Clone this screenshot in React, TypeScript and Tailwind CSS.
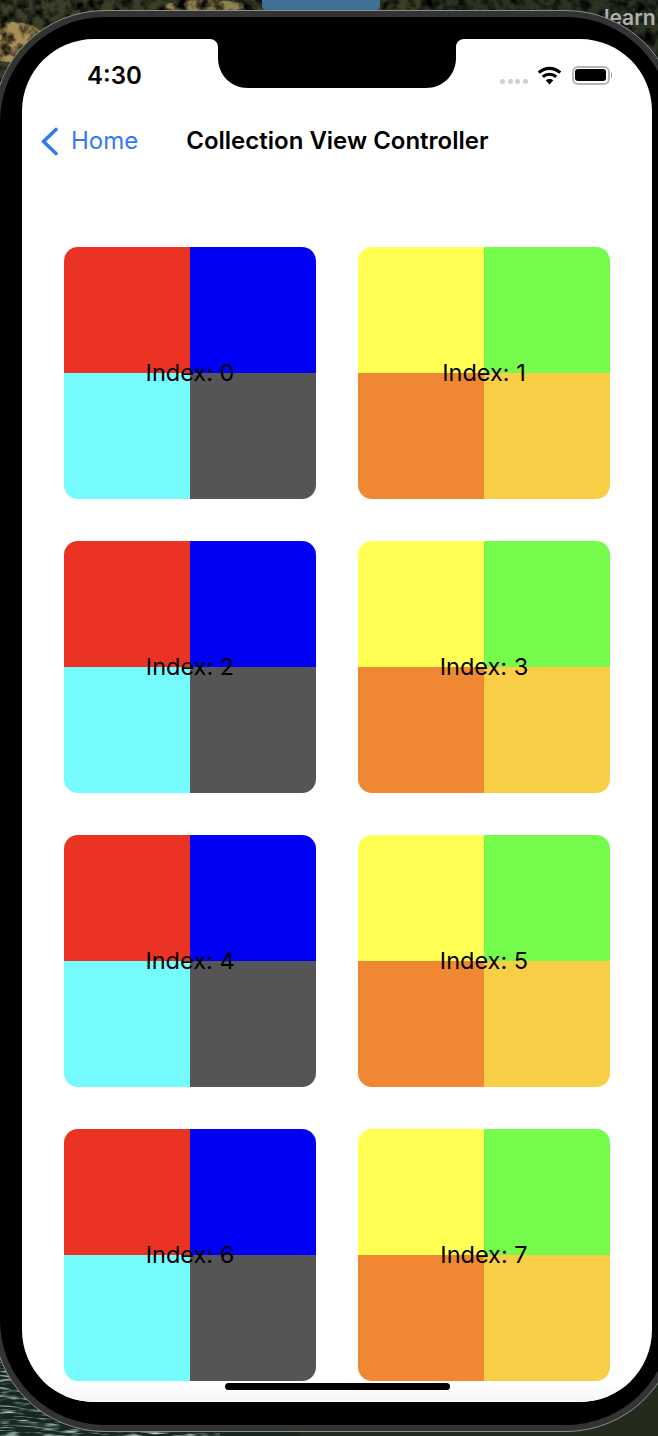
const cards = [0, 1, 2, 3, 4, 5, 6, 7];

const coolColors = ["bg-[#eb3323]", "bg-[#0000f5]", "bg-[#75fbfd]", "bg-[#555555]"];
const warmColors = ["bg-[#ffff54]", "bg-[#75fb4c]", "bg-[#f08733]", "bg-[#f7ce46]"];

function Wallpaper() {
  return (
    <svg className="absolute inset-0" width="658" height="1436" viewBox="0 0 658 1436">
      <defs>
        <filter id="rough" x="0" y="0" width="100%" height="100%">
          <feTurbulence type="fractalNoise" baseFrequency="0.09" numOctaves="3" seed="7" />
          <feColorMatrix values="0 0 0 0 0  0 0 0 0 0  0 0 0 0 0  2.6 0 0 0 -1.05" />
        </filter>
        <filter id="water" x="0" y="0" width="100%" height="100%">
          <feTurbulence type="fractalNoise" baseFrequency="0.05 0.4" numOctaves="2" seed="3" />
          <feColorMatrix values="0 0 0 0 0.5  0 0 0 0 0.72  0 0 0 0 0.7  3 0 0 0 -1.45" />
        </filter>
      </defs>
      <rect width="658" height="120" fill="#3a4028" />
      <rect x="420" width="238" height="120" fill="#2b3322" />
      <ellipse cx="12" cy="42" rx="34" ry="20" fill="#a88f58" />
      <ellipse cx="205" cy="6" rx="40" ry="6" fill="#8f8050" />
      <rect width="658" height="120" filter="url(#rough)" />
      <rect y="1340" width="658" height="96" fill="#17261f" />
      <rect x="300" y="1340" width="358" height="96" fill="#232b1c" />
      <rect y="1340" width="220" height="96" filter="url(#water)" />
    </svg>
  );
}

function WifiIcon() {
  return (
    <svg width="25" height="19" viewBox="0 0 25 19" fill="none" stroke="#000" strokeWidth="3.2">
      <path d="M1.8 6.6C8 .9 17 .9 23.2 6.6" />
      <path d="M5.8 10.8c3.9-3.4 9.5-3.4 13.4 0" />
      <path d="M12.5 18.4l-3.8-4.1c2.2-1.8 5.4-1.8 7.6 0z" fill="#000" stroke="none" />
    </svg>
  );
}

function StatusBar() {
  return (
    <div className="flex h-[32px] items-center justify-between pl-[65px] pr-[40px]">
      <span className="mt-[2px] text-[24px] font-semibold leading-none text-black">4:30</span>
      <div className="flex items-center">
        <div className="mt-[12px] flex gap-[2.5px]">
          <span className="h-[5px] w-[5px] rounded-full bg-[#cfcfcf]" />
          <span className="h-[5px] w-[5px] rounded-full bg-[#cfcfcf]" />
          <span className="h-[5px] w-[5px] rounded-full bg-[#cfcfcf]" />
          <span className="h-[5px] w-[5px] rounded-full bg-[#cfcfcf]" />
        </div>
        <div className="ml-[9px]">
          <WifiIcon />
        </div>
        <div className="ml-[10px] flex items-center">
          <div className="flex h-[19px] w-[38px] rounded-[6px] border-2 border-[#b5b5b5] p-[1.5px]">
            <div className="flex-1 rounded-[3px] bg-black" />
          </div>
          <div className="ml-[1px] h-[6px] w-[1.5px] rounded-r-full bg-[#a9a9a9]" />
        </div>
      </div>
    </div>
  );
}

function NavBar() {
  return (
    <div className="mt-[28px] flex h-[44px] items-center pl-[18px]">
      <svg width="19" height="29" viewBox="0 0 19 29" fill="none" stroke="#3478f6" strokeWidth="3.6" strokeLinecap="round" strokeLinejoin="round">
        <path d="M16 2.5L3.5 14.5 16 26.5" />
      </svg>
      <span className="ml-[12px] text-[24px] leading-none text-[#3478f6]">Home</span>
      <span className="ml-[48px] text-[24px] font-semibold leading-none text-black">Collection View Controller</span>
    </div>
  );
}

function Card({ index }: { index: number }) {
  const colors = index % 2 === 0 ? coolColors : warmColors;
  return (
    <div className="relative h-[252px] w-[252px] overflow-hidden rounded-[14px]">
      <div className="grid h-full grid-cols-2 grid-rows-2">
        {colors.map((color) => (
          <div key={color} className={color} />
        ))}
      </div>
      <div className="absolute inset-0 flex items-center justify-center text-[23.5px] leading-none text-black">
        Index: {index}
      </div>
    </div>
  );
}

function Notch() {
  return (
    <svg className="absolute left-[188px] top-0" width="254" height="49" viewBox="0 0 254 49" fill="#000">
      <path d="M0 0h254c-4 0-8 3-8 8v11c0 17-13 30-30 30H38C21 49 8 36 8 19V8C8 3 4 0 0 0z" />
    </svg>
  );
}

export default function App() {
  return (
    <div className="relative h-[1436px] w-[658px] overflow-hidden bg-[#1f2a1d] font-['Inter',sans-serif]">
      <Wallpaper />
      <div className="absolute left-[262px] top-0 h-[10px] w-[118px] rounded-b-[4px] bg-[#3f7196]" />
      <div className="absolute left-[604px] top-[5px] text-[21px] font-semibold leading-[26px] text-[#b0b0b0]">learn</div>

      <div className="relative pt-[10px]">
        <div className="-ml-[7px] h-[1422px] w-[685px] rounded-[112px] border border-[#8c8c8c] bg-[#333333] p-[6px]">
          <div className="h-full rounded-[105px] bg-black pl-[22px] pt-[22px]">
            <div className="relative flex h-[1363px] w-[630px] flex-col overflow-hidden rounded-[72px] bg-white">
              <Notch />
              <div className="pt-[20px]">
                <StatusBar />
                <NavBar />
              </div>
              <div className="mt-[84px] grid grid-cols-[252px_252px] gap-[42px] pl-[42px]">
                {cards.map((index) => (
                  <Card key={index} index={index} />
                ))}
              </div>
              <div className="flex flex-1 justify-center bg-gradient-to-b from-white to-[#f6f6f6] pt-[2px]">
                <div className="h-[7px] w-[225px] rounded-full bg-black" />
              </div>
            </div>
          </div>
        </div>
      </div>
    </div>
  );
}
